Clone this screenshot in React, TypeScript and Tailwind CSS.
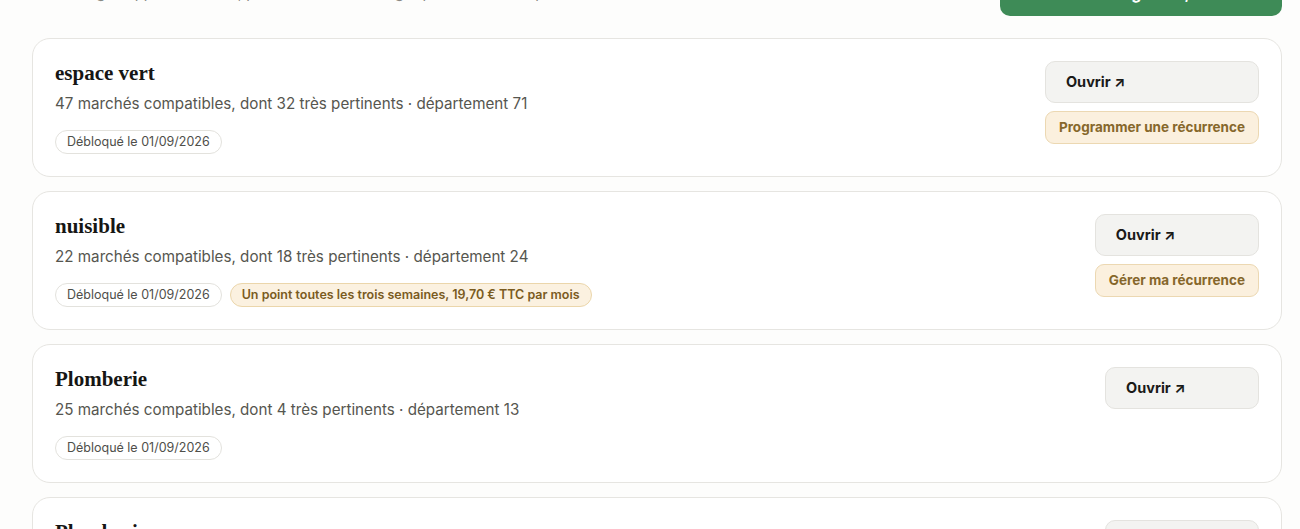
import React from 'react';

interface Ciblage {
  title: string;
  count: number;
  relevant: number;
  dept: string;
  unlocked: string;
  recurrence?: string;
  action?: string;
}

const ciblages: Ciblage[] = [
  {
    title: 'espace vert',
    count: 47,
    relevant: 32,
    dept: '71',
    unlocked: '01/09/2026',
    action: 'Programmer une récurrence'
  },
  {
    title: 'nuisible',
    count: 22,
    relevant: 18,
    dept: '24',
    unlocked: '01/09/2026',
    recurrence: 'Un point toutes les trois semaines, 19,70 € TTC par mois',
    action: 'Gérer ma récurrence'
  },
  { title: 'Plomberie', count: 25, relevant: 4, dept: '13', unlocked: '01/09/2026' },
  { title: 'Plomberie', count: 25, relevant: 4, dept: '13', unlocked: '01/09/2026' }
];

function CiblageCard({ item }: { item: Ciblage }) {
  return (
    <div className="flex items-start justify-between rounded-[18px] border border-[#e6e5e1] bg-white p-[22px]">
      <div className="flex flex-col">
        <h3 className="font-['Liberation_Serif',serif] text-[21px] font-bold leading-6 text-[#161614]">
          {item.title}
        </h3>
        <p className="mt-[7px] text-[15.2px] leading-6 text-[#56564f]">
          {item.count} marchés compatibles, dont {item.relevant} très pertinents · département {item.dept}
        </p>
        <div className="mt-[14px] flex items-center gap-2">
          <span className="flex h-6 items-center rounded-full border border-[#e3e2dd] bg-white px-[11px] text-[12.5px] text-[#4f4f4a]">
            Débloqué le {item.unlocked}
          </span>
          {item.recurrence && (
            <span className="flex h-6 items-center rounded-full border border-[#ebd6ab] bg-[#fbf1e0] px-[11px] text-[12.5px] font-semibold text-[#7a5b1e]">
              {item.recurrence}
            </span>
          )}
        </div>
      </div>
      <div className="flex min-w-[154px] flex-col items-stretch gap-2">
        <button className="h-[42px] rounded-[10px] border border-[#e4e3df] bg-[#f3f3f1] px-5 text-left text-[14.5px] font-bold text-[#1a1a18]">
          Ouvrir ↗
        </button>
        {item.action && (
          <button className="h-[33px] rounded-[9px] border border-[#ecd8b2] bg-[#fbf0de] px-[13px] text-left text-[13.5px] font-bold text-[#86672b]">
            {item.action}
          </button>
        )}
      </div>
    </div>
  );
}

export default function App() {
  return (
    <div className="h-[529px] overflow-hidden bg-[#fdfdfc] pl-8 pr-[18px] font-['Inter',sans-serif]">
      <div className="-mt-[30px] mb-[22px] flex items-center justify-between">
        <p className="text-[15px] text-[#8a8a84]">
          Vos ciblages apparaissent ici, par ordre de déblocage (plus récents en premier)
        </p>
        <button className="h-[46px] rounded-[10px] bg-[#3e8b57] px-5 text-base font-bold text-white">
          Nouveau ciblage à 19,90 € TTC
        </button>
      </div>
      <div className="flex flex-col gap-[14px]">
        {ciblages.map((c, i) => (
          <CiblageCard key={i} item={c} />
        ))}
      </div>
    </div>
  );
}
